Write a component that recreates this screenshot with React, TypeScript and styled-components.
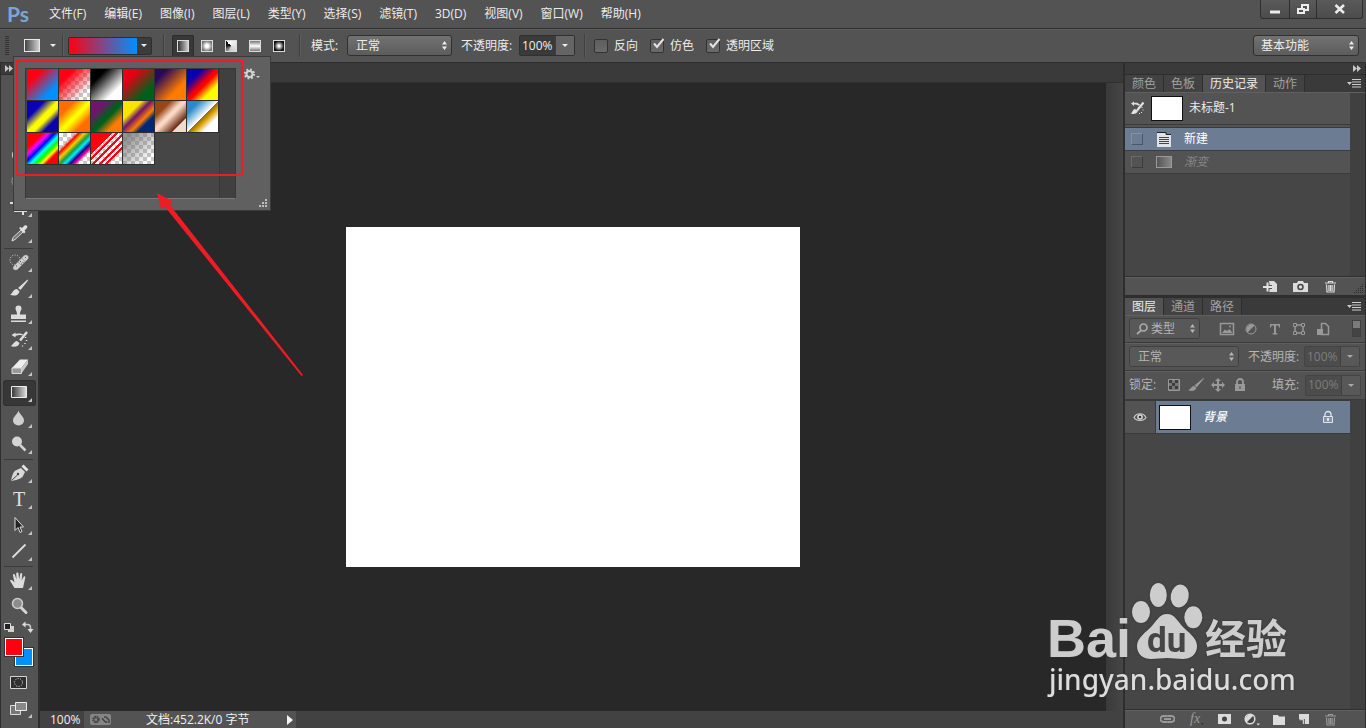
import React from "react";
import styled, { createGlobalStyle, css } from "styled-components";

const GlobalStyle = createGlobalStyle`
  *, *::before, *::after { box-sizing: border-box; }
  body { margin: 0; background: #282828; }
  body, button, input, select {
    font-family: "Open Sans", "Noto Sans CJK SC", sans-serif;
    font-size: 12px;
    line-height: 16px;
    color: #ececec;
  }
  button { padding: 0; border: 0; background: none; }
  ul { list-style: none; margin: 0; padding: 0; }
`;

const LINE = "#2e2e2e";
const CHECKER = "repeating-conic-gradient(#c8c8c8 0 25%, #ffffff 0 50%) 0 0 / 8px 8px";

/* ---------- page frame ---------- */

const Page = styled.div`
  position: relative;
  display: flex;
  flex-direction: column;
  min-height: 100vh;
  overflow: hidden;
`;

const MenuBar = styled.header`
  display: flex;
  align-items: center;
  height: 28px;
  padding-left: 7px;
  background: #535353;
`;

const Logo = styled.span`
  width: 32px;
  font-family: Lato, sans-serif;
  font-size: 21px;
  font-weight: 700;
  line-height: 26px;
  color: #7ba6d2;
`;

const MenuList = styled.nav`
  display: flex;
  flex: 1;
  gap: 18px;
  padding-left: 10px;
`;

const MenuItem = styled.button`
  white-space: nowrap;
`;

const WindowButtons = styled.div`
  display: flex;
  align-self: flex-start;
  margin-right: 3px;
  border: 1px solid ${LINE};
  border-top: 0;
  border-radius: 0 0 3px 3px;
  background: linear-gradient(#5a5a5a, #4c4c4c);
`;

const WindowButton = styled.button<{ $width: number }>`
  display: flex;
  justify-content: center;
  width: ${(p) => p.$width}px;
  height: 18px;
  & + & { border-left: 1px solid ${LINE}; }
`;

const OptionsBar = styled.div`
  position: relative;
  z-index: 2;
  display: flex;
  align-items: center;
  height: 35px;
  padding: 0 7px 0 5px;
  border-top: 1px solid ${LINE};
  border-bottom: 1px solid ${LINE};
  background: #535353;
  box-shadow: inset 0 1px #606060;
  white-space: nowrap;
`;

const Divider = styled.i`
  width: 2px;
  height: 23px;
  background: #404040;
  border-right: 1px solid #5c5c5c;
`;

const Grip = styled.i`
  width: 4px;
  height: 19px;
  background: repeating-linear-gradient(#333 0 1px, transparent 1px 2px);
`;

const ToolPreset = styled.button`
  display: flex;
  align-items: center;
  gap: 10px;
  width: 53px;
  padding-left: 15px;
`;

const Ramp = styled.i`
  width: 16px;
  height: 13px;
  border: 1px solid #e8e8e8;
  background: linear-gradient(90deg, #444, #d0d0d0);
`;

const Caret = styled.i`
  width: 0;
  height: 0;
  border: 3px solid transparent;
  border-top-color: currentColor;
  border-bottom: 0;
`;

const GradientPicker = styled.div`
  display: flex;
  width: 84px;
  height: 18px;
  margin: 0 11px 0 4px;
  border: 1px solid ${LINE};
  border-radius: 2px;
  background: #3c3c3c;
`;

const GradientPreview = styled.button`
  flex: 1;
  background: linear-gradient(90deg, #ff0010, #0090ff);
`;

const PickerArrow = styled.button`
  display: flex;
  align-items: center;
  justify-content: center;
  width: 14px;
`;

const TypeGroup = styled.div`
  display: flex;
  gap: 2px;
  margin: 0 9px 0 7px;
`;

const TypeButton = styled.button<{ $active?: boolean }>`
  display: flex;
  align-items: center;
  justify-content: center;
  width: 22px;
  height: 22px;
  border-radius: 2px;
  ${(p) => p.$active && css`background: #383838; box-shadow: inset 0 0 0 1px #2c2c2c;`}
`;

const TypeFill = styled.i<{ $fill: string }>`
  width: 12px;
  height: 12px;
  border: 1px solid #dcdcdc;
  background: ${(p) => p.$fill};
`;

const Label = styled.label<{ $dim?: boolean }>`
  color: ${(p) => (p.$dim ? "#b4b4b4" : "#ececec")};
`;

const FieldLabel = styled(Label)<{ $width: number }>`
  width: ${(p) => p.$width}px;
  flex: none;
`;

const SelectBox = styled.span<{ $width: number; $dim?: boolean }>`
  position: relative;
  flex: none;
  display: flex;
  width: ${(p) => p.$width}px;
  height: 21px;
  border: 1px solid ${(p) => (p.$dim ? "#404040" : "#303030")};
  border-radius: 3px;
  background: ${(p) => (p.$dim ? "#585858" : "linear-gradient(#727272, #5c5c5c)")};
  color: ${(p) => (p.$dim ? "#b4b4b4" : "#ececec")};
  svg { position: absolute; right: 3px; top: 4px; pointer-events: none; }
`;

const Select = styled.select<{ $pad: number }>`
  appearance: none;
  width: 100%;
  padding: 0 0 0 ${(p) => p.$pad}px;
  border: 0;
  background: none;
  color: inherit;
`;

const NumberBox = styled.span<{ $dim?: boolean }>`
  display: flex;
  flex: none;
  width: 56px;
  height: 21px;
  border: 1px solid ${(p) => (p.$dim ? "#444" : "#303030")};
  border-radius: 2px;
  color: ${(p) => (p.$dim ? "#7d7d7d" : "#f0f0f0")};
  background: ${(p) => (p.$dim ? "#4c4c4c" : "#3a3a3a")};
`;

const NumberInput = styled.input`
  width: 35px;
  padding: 0 0 0 2px;
  border: 0;
  background: none;
  color: inherit;
`;

const NumberArrow = styled.button<{ $dim?: boolean }>`
  display: flex;
  flex: 1;
  align-items: center;
  justify-content: center;
  border-left: 1px solid #404040;
  background: ${(p) => (p.$dim ? "#585858" : "#656565")};
  color: ${(p) => (p.$dim ? "#a8a8a8" : "#ececec")};
`;

const Check = styled.span`
  position: relative;
  display: flex;
  align-items: center;
  gap: 6px;
  margin-right: 12px;
  svg { position: absolute; left: 2px; top: -1px; pointer-events: none; }
`;

const CheckInput = styled.input`
  appearance: none;
  width: 14px;
  height: 14px;
  margin: 0;
  border: 1px solid #333;
  border-radius: 2px;
  background: linear-gradient(#5e5e5e, #6a6a6a);
`;

const Spacer = styled.i`
  flex: 1;
`;

/* ---------- gradient popup ---------- */

const Popup = styled.section`
  position: absolute;
  top: 27px;
  left: 13px;
  display: flex;
  align-items: flex-start;
  width: 258px;
  height: 155px;
  padding: 11px 0 0 11px;
  border: 1px solid #3a3a3a;
  background: #606060;
`;

const PopupList = styled.div`
  display: flex;
  width: 211px;
  height: 131px;
  border: 1px solid #383838;
  border-bottom-color: #7a7a7a;
  background: #464646;
`;

const SwatchGrid = styled.ul`
  display: grid;
  flex: 1;
  grid-template-columns: repeat(6, 32px);
  grid-auto-rows: 32px;
  padding: 0 0 0 1px;
`;

const Swatch = styled.button<{ $fill: string }>`
  display: block;
  width: 32px;
  height: 32px;
  border: 1px solid #2e2e2e;
  border-width: 0 1px 1px 0;
  background: ${(p) => p.$fill};
`;

const PopupScroll = styled.i`
  width: 16px;
  border: 1px solid #383838;
  border-width: 0 0 0 1px;
  background: #404040;
`;

const GearButton = styled.button`
  display: flex;
  margin: 0 0 0 8px;
`;

const ResizeGrip = styled.svg`
  position: absolute;
  right: 2px;
  bottom: 2px;
`;

/* ---------- workspace ---------- */

const Workspace = styled.main`
  display: flex;
  flex: 1;
`;

const ToolColumn = styled.aside`
  display: flex;
  flex: none;
  flex-direction: column;
  width: 40px;
  border: solid ${LINE};
  border-width: 0 2px 0 1px;
  background: #535353;
`;

const DockHeader = styled.div<{ $end?: boolean }>`
  display: flex;
  align-items: center;
  justify-content: ${(p) => (p.$end ? "flex-end" : "flex-start")};
  height: 12px;
  padding: 0 4px;
  border-bottom: 1px solid ${LINE};
  background: #3a3a3a;
`;

const ToolList = styled.div`
  display: flex;
  flex-direction: column;
  padding: 16px 0 0 3px;
`;

const ToolButton = styled.button<{ $active?: boolean }>`
  display: block;
  width: 31px;
  height: 24px;
  margin: 1px 0;
  border-radius: 2px;
  ${(p) => p.$active && css`background: #373737; box-shadow: 0 0 0 1px #303030;`}
  svg { display: block; }
`;

const ToolSeparator = styled.i`
  width: 29px;
  height: 1px;
  margin: 1px 0;
  background: #3a3a3a;
`;

const ColorArea = styled.div`
  position: relative;
  width: 29px;
  height: 29px;
  margin: 3px 0 4px 0;
`;

const ColorChip = styled.button<{ $color: string; $back?: boolean }>`
  position: absolute;
  left: ${(p) => (p.$back ? 10 : 0)}px;
  top: ${(p) => (p.$back ? 10 : 0)}px;
  width: 20px;
  height: 20px;
  border: 1px solid #333;
  background: ${(p) => p.$color};
  box-shadow: inset 0 0 0 1px #fff;
`;

const Center = styled.section`
  display: flex;
  flex: 1;
  flex-direction: column;
  min-width: 0;
`;

const DocumentTabs = styled.div`
  height: 20px;
  border-bottom: 1px solid #303030;
  background: #3a3a3a;
`;

const CanvasRow = styled.div`
  display: flex;
  flex: 1;
`;

const CanvasArea = styled.div`
  display: flex;
  flex: 1;
  align-items: center;
  justify-content: center;
  background: #282828;
`;

const Artboard = styled.div`
  width: 454px;
  height: 340px;
  background: #fff;
`;

const ScrollTrack = styled.i`
  width: 17px;
  background: linear-gradient(90deg, #3a3a3a, #464646);
`;

const StatusBar = styled.footer`
  display: flex;
  align-items: center;
  height: 17px;
  background: #424242;
  color: #f0f0f0;
  white-space: nowrap;
`;

const Zoom = styled.span`
  width: 44px;
  padding-left: 10px;
`;

const StatusInfo = styled.div`
  display: flex;
  align-items: center;
  width: 212px;
  height: 17px;
  padding: 0 3px 0 6px;
  background: #535353;
`;

const StatusText = styled.span`
  flex: 1;
  padding-left: 35px;
`;

/* ---------- panels ---------- */

const Dock = styled.aside`
  display: flex;
  flex: none;
  flex-direction: column;
  width: 243px;
  border: solid ${LINE};
  border-width: 0 1px 0 2px;
  background: #464646;
`;

const TabBar = styled.div`
  display: flex;
  height: 17px;
  padding-right: 4px;
  background: #3a3a3a;
`;

const Tab = styled.button<{ $active?: boolean }>`
  height: 17px;
  padding: 0 7px;
  border-right: 1px solid ${LINE};
  color: ${(p) => (p.$active ? "#ececec" : "#a0a0a0")};
  background: ${(p) => (p.$active ? "#535353" : "#424242")};
`;

const PanelMenu = styled.button`
  display: flex;
  align-items: center;
  margin-left: auto;
`;

const PanelBody = styled.div`
  display: flex;
`;

const HistoryPanel = styled(PanelBody)`
  height: 184px;
  border-top: 1px solid #606060;
`;

const PanelList = styled.ul`
  flex: 1;
  background: #464646;
`;

const Snapshot = styled.li`
  display: flex;
  align-items: center;
  gap: 6px;
  height: 35px;
  padding: 0 5px 1px 5px;
  border-bottom: 4px double #3a3a3a;
  background: #535353;
`;

const Thumb = styled.i`
  width: 32px;
  height: 25px;
  border: 1px solid #111;
  background: #fff;
`;

const HistoryRow = styled.li<{ $active?: boolean }>`
  display: flex;
  align-items: center;
  height: 23px;
  padding-left: 6px;
  border-bottom: 1px solid #3c3c3c;
  background: ${(p) => (p.$active ? "#6b7c93" : "#535353")};
  color: ${(p) => (p.$active ? "#fff" : "#858585")};
  font-style: ${(p) => (p.$active ? "normal" : "italic")};
  svg, ${Ramp} { margin: 0 12px 0 13px; flex: none; }
  ${Ramp} { height: 12px; border-color: #9a9a9a; background: linear-gradient(90deg, #555, #888); }
`;

const HistoryMark = styled.i<{ $active?: boolean }>`
  width: 12px;
  height: 12px;
  border: 1px solid ${(p) => (p.$active ? "#4a5666" : "#3c3c3c")};
  border-top-color: ${(p) => (p.$active ? "#8592a5" : "#6a6a6a")};
  border-left-color: ${(p) => (p.$active ? "#8592a5" : "#6a6a6a")};
`;

const PanelScroll = styled.i`
  width: 15px;
  background: #404040;
`;

const PanelFooter = styled.div<{ $gap: number; $right: number }>`
  position: relative;
  display: flex;
  align-items: center;
  justify-content: flex-end;
  gap: ${(p) => p.$gap}px;
  height: 19px;
  padding-right: ${(p) => p.$right}px;
  border-top: 1px solid #303030;
  background: #535353;
  box-shadow: inset 0 1px #606060;
`;

const FooterButton = styled.button`
  display: flex;
`;

const DockGap = styled.i`
  height: 3px;
  background: ${LINE};
`;

const LayerRowBar = styled.div<{ $height: number }>`
  display: flex;
  align-items: center;
  height: ${(p) => p.$height}px;
  padding: 0 4px;
  border-bottom: 1px solid #3a3a3a;
  background: #535353;
  box-shadow: inset 0 1px #606060;
  white-space: nowrap;
`;

const FilterIcons = styled.div`
  display: flex;
  flex: 1;
  gap: 8px;
  padding-left: 19px;
  color: #999;
`;

const LockIcons = styled.div`
  display: flex;
  flex: 1;
  gap: 6px;
  color: #999;
`;

const IconButton = styled.button`
  display: flex;
  color: inherit;
`;

const FilterToggle = styled.button`
  width: 9px;
  height: 17px;
  border: 1px solid #404040;
  background: linear-gradient(#7a7a7a 0 50%, #444 50%);
`;

const LayersBody = styled(PanelBody)`
  flex: 1;
`;

const LayerItem = styled.li`
  display: flex;
  align-items: center;
  height: 34px;
  padding-right: 16px;
  border: solid #3a3a3a;
  border-width: 1px 0;
  background: linear-gradient(90deg, #535353 30px, #3a3a3a 30px 31px, #6b7c93 31px);
`;

const EyeButton = styled.button`
  display: flex;
  justify-content: center;
  width: 34px;
  padding-right: 4px;
`;

const LayerName = styled.span`
  flex: 1;
  padding-left: 12px;
  font-style: italic;
  font-weight: 500;
  color: #fff;
`;

/* ---------- overlays ---------- */

const Annotation = styled.svg`
  position: absolute;
  z-index: 3;
  top: 0;
  left: 0;
  pointer-events: none;
`;

const Watermark = styled.svg`
  position: absolute;
  z-index: 3;
  right: 66px;
  bottom: 24px;
  pointer-events: none;
  filter: drop-shadow(0 0 1px #333);
`;

/* ---------- drawings ---------- */

const UpDown = () => (
  <svg width="7" height="11" viewBox="0 0 7 11" fill="currentColor">
    <path d="M3.5 1 6 4.5H1zM3.5 10 1 6.5h5z" />
  </svg>
);

const Chevrons = () => (
  <svg width="8" height="7" viewBox="0 0 8 7" fill="#c8c8c8">
    <path d="M0 0l4 3.5L0 7zM4 0l4 3.5L4 7z" />
  </svg>
);

const MenuGlyph = () => (
  <svg width="14" height="9" viewBox="0 0 14 9">
    <path d="M0 3h5L2.500 6z" fill="#ccc" />
    <path d="M5 .5h9M5 3h9M5 5.500h9M5 8h9" fill="none" stroke="#ccc" strokeWidth="1" />
  </svg>
);

const Tick = () => (
  <svg width="15" height="14" viewBox="0 0 15 14" fill="none" stroke="#e4e4e4" strokeWidth="2">
    <path d="M2 6.500 5 10 11.500 2" />
  </svg>
);

const Gear = () => (
  <svg width="16" height="14" viewBox="0 0 16 14">
    <circle cx="5.500" cy="6" r="3" fill="none" stroke="#d4d4d4" strokeWidth="2" />
    <circle cx="5.500" cy="6" r="4.600" fill="none" stroke="#d4d4d4" strokeWidth="2" strokeDasharray="1.800 1.810" />
    <path d="M12 8h4l-2 2z" fill="#ccc" />
  </svg>
);

const Trash = ({ color = "#d0d0d0" }) => (
  <svg width="13" height="13" viewBox="0 0 13 13" fill="none" stroke={color}>
    <path d="M1 3h11M4.500 2.500v-1h4v1M2.500 4.500 3 12h7l.5-7.500M4.900 5v6M6.500 5v6M8.100 5v6" strokeWidth="1.200" />
  </svg>
);

const Padlock = () => (
  <svg width="12" height="14" viewBox="0 0 12 14">
    <path d="M3 6V4.500a3 3 0 0 1 6 0V6" fill="none" stroke="#e0e4ea" strokeWidth="1.300" />
    <path d="M1.500 6.500h9v6h-9z" fill="#8492a6" stroke="#e0e4ea" />
    <path d="M6 8v3" stroke="#fff" strokeWidth="1.500" />
  </svg>
);

const HistoryBrush = () => (
  <svg width="15" height="14" viewBox="0 0 15 14">
    <path d="M1 2.500 4 .5v1.200h3l3 1.800-1 1.200-3-1.200H4V5z" fill="#ddd" />
    <path d="M13.500 1.500 7 9.500" stroke="#e4e4e4" strokeWidth="2" />
    <path d="M.5 12.500c2-.5 2-4 4.500-4.500l2.800 2C7 13 3.500 13.500.5 12.500z" fill="#e4e4e4" />
    <path d="M12 6v1M13 8.500v1M11.500 11v1M9.500 12v1" stroke="#ddd" />
  </svg>
);

const DocIcon = () => (
  <svg width="16" height="15" viewBox="-1 0 16 15">
    <path d="M0 1h9v2h5v12H0z" fill="#dfe3e8" />
    <path d="M2 5.500h10M2 7.500h10M2 9.500h10M2 11.500h10" stroke="#3e4958" />
    <path d="M0 .5h9v2h5" fill="none" stroke="#222" />
  </svg>
);

const Tri = () => <path d="M28 18v4h-4z" fill="#c4c4c4" />;

const toolArt: Record<string, React.ReactNode> = {
  移动: <path d="M9 5v13l4-4h5z" fill="#ddd" />,
  选框: <path d="M9.500 6.500h13v11h-13z" fill="none" stroke="#ddd" strokeDasharray="2 2" />,
  套索: <path d="M10 16c-4-8 3-11 8-9s4 8-2 7-7 0-6 5" fill="none" stroke="#ddd" strokeWidth="1.500" />,
  快速选择: <circle cx="14" cy="12" r="6" fill="none" stroke="#ddd" strokeDasharray="1 1" />,
  裁剪: <path d="M6 8h13v12M11 3v13h12" fill="none" stroke="#ddd" strokeWidth="2" />,
  吸管: (
    <>
      <path d="M8 20l1-3.500 8-7.500 2 2-8 7.500z" fill="#777" stroke="#ddd" />
      <path d="M15 7l1.500-1 1.500 1 2.500-2.500c2-1 3.500.5 2.500 2.500L20.500 9.500l1 1.500-1.500 1.500z" fill="#e0e0e0" />
    </>
  ),
  污点修复: (
    <>
      <circle cx="11" cy="10" r="5" fill="none" stroke="#ddd" strokeDasharray="1 1.500" />
      <path d="M9.500 16.500 20 5.500c3-1.500 5.500 1 4 3.500L13.500 19.500c-3 1.500-5.500-.500-4-3z" fill="#d0d0d0" stroke="#888" strokeWidth=".5" />
      <path d="M14 12l4 4M17.500 8l4 4" stroke="#888" strokeWidth=".7" />
      <path d="M16 11.500h1M18.500 12.500h1M17 14h1M12 16h1M21 7.500h1" stroke="#555" />
    </>
  ),
  画笔: (
    <>
      <path d="M23.500 3.500c.8.500.5 1.200 0 1.800L16.500 14l-2.500-2z" fill="#ddd" />
      <path d="M6 18.500c2.500-.5 2.500-5 7-5.500l2.500 2.500C14.500 20 9 20.500 6 18.500z" fill="#e0e0e0" />
    </>
  ),
  图章: (
    <path d="M11.500 6.500a3 3 0 0 1 6 0c0 2-1.500 2.500-1.500 6h6V17H7v-4.500h6c0-3.500-1.500-4-1.500-6zM7 18.500h15V20H7z" fill="#dcdcdc" />
  ),
  历史画笔: (
    <>
      <path d="M7.500 7l4-2.500v1.500c4-1 7-.500 8 1.500-3-1-5-.500-8 .5v1.500z" fill="#ddd" />
      <path d="M23 4l-7 8.500" stroke="#ddd" strokeWidth="2.500" />
      <path d="M6.500 18c2.500-.5 3-4.500 6.500-5l2.500 2c-1 4-5.500 4.500-9 3z" fill="#ddd" />
      <path d="M21.500 9v1M22.500 12v1M21 15v1M18.500 17.500v1" stroke="#ddd" strokeWidth="1.500" />
    </>
  ),
  橡皮擦: (
    <>
      <path d="M8 14l8-8.500h8l-6.500 8.500z" fill="#eee" />
      <path d="M8 14h9.500v5.500H8z" fill="#999" stroke="#ddd" />
      <path d="M17.500 14 24 5.500v4.500l-6.500 9.500z" fill="#c8c8c8" />
    </>
  ),
  渐变: (
    <>
      <defs>
        <linearGradient id="toolRamp">
          <stop offset="0" stopColor="#333" />
          <stop offset="1" stopColor="#e0e0e0" />
        </linearGradient>
      </defs>
      <path d="M7.500 6.500h15v11h-15z" fill="url(#toolRamp)" stroke="#ececec" />
    </>
  ),
  模糊: <path d="M14.500 4.500c1 4 5.500 6 5.500 10a5.500 5 0 0 1-11 0c0-4 4.500-6 5.500-10z" fill="#cfcfcf" />,
  减淡: (
    <>
      <circle cx="13" cy="9.500" r="5" fill="#d4d4d4" />
      <path d="M16 13l5.500 5.500" stroke="#d4d4d4" strokeWidth="2.500" />
    </>
  ),
  钢笔: (
    <>
      <path d="M7 20c1-5 2-9 4.500-10.500L17 7l4 4-2.500 5c-3 2.500-6 3-11.500 4z" fill="#d8d8d8" />
      <path d="M17.500 5.500l2-2 5 5-2 2z" fill="#e4e4e4" />
      <path d="M7.500 19.500l6-5.500" stroke="#444" />
      <circle cx="14" cy="13" r="1.200" fill="#444" />
    </>
  ),
  文字: <text x="9" y="19" fontFamily="Liberation Serif, serif" fontSize="20" fill="#e0e0e0">T</text>,
  路径选择: <path d="M11 4.500v13l3-3 2 5 2-1-2-4.500h3.500z" fill="#222" stroke="#ddd" />,
  直线: <path d="M8.500 18.500 21.500 5.500" stroke="#dedede" strokeWidth="1.800" />,
  抓手: (
    <path
      d="M10.500 20 6.500 13.500c-1-1.500.5-2.500 2-1l2 2-1.500-7c-.3-1.500 1.500-2 2-.5l1.500 4.500-.3-6c0-1.500 2.200-1.500 2.300 0l.7 6 1-5.500c.3-1.500 2.200-1 2 .5l-.5 6 1.800-3.500c.8-1.300 2.200-.5 1.700 1L19 20z"
      fill="#dcdcdc"
    />
  ),
  缩放: (
    <>
      <path d="M17 13.500l5 5" stroke="#d4d4d4" strokeWidth="3" strokeLinecap="round" />
      <circle cx="13.500" cy="9.500" r="5" fill="#8c8c8c" stroke="#ccc" strokeWidth="1.500" />
    </>
  ),
};

const toolGroups = [
  ["移动", "选框", "套索", "快速选择", "裁剪", "吸管"],
  ["污点修复", "画笔", "图章", "历史画笔", "橡皮擦", "渐变", "模糊", "减淡"],
  ["钢笔", "文字", "路径选择", "直线"],
  ["抓手", "缩放"],
];

const ToolArt = ({ children, corner = true }: { children: React.ReactNode; corner?: boolean }) => (
  <svg width="31" height="24" viewBox="0 1 31 24">
    {children}
    {corner && <Tri />}
  </svg>
);

/* ---------- data ---------- */

const menus = ["文件(F)", "编辑(E)", "图像(I)", "图层(L)", "类型(Y)", "选择(S)", "滤镜(T)", "3D(D)", "视图(V)", "窗口(W)", "帮助(H)"];

const gradientTypes: [string, string][] = [
  ["线性", "linear-gradient(90deg, #333, #ccc)"],
  ["径向", "radial-gradient(#fff 20%, #777 75%)"],
  ["角度", "conic-gradient(from 315deg, #fff, #ccc 65%, #111 90%)"],
  ["对称", "linear-gradient(#777, #fff 50%, #777)"],
  ["菱形", "radial-gradient(#fff 10%, #111 70%)"],
];

const swatches: [string, string][] = [
  ["前景色到背景色", "linear-gradient(135deg, #ff0010 25%, #0090ff 75%)"],
  ["前景色到透明", `linear-gradient(135deg, #ff0010 25%, #ff001000 80%), ${CHECKER}`],
  ["黑白", "linear-gradient(135deg, #000 25%, #fff 75%)"],
  ["红绿", "linear-gradient(135deg, #e60012 25%, #00601b 75%)"],
  ["紫橙", "linear-gradient(135deg, #290a59 20%, #ff7c00 70%)"],
  ["蓝红黄", "linear-gradient(135deg, #0a00b2 25%, #ff0000 50%, #ff0000 54%, #fffc00 75%)"],
  ["蓝黄蓝", "linear-gradient(135deg, #0b01b8 28%, #fdfa03 50%, #fdfa03 60%, #0b02aa 76%)"],
  ["橙黄橙", "linear-gradient(135deg, #ff6e02 25%, #ffff00 50%, #ffff00 54%, #ff6d00 76%)"],
  ["紫绿橙", "linear-gradient(135deg, #6f156c 25%, #00601b 50%, #00601b 54%, #fd7c00 76%)"],
  ["黄紫橙蓝", "linear-gradient(135deg, #f9e600 30%, #6f156c 45%, #fd7c00 62%, #002874 74%)"],
  ["铜色", "linear-gradient(135deg, #974617 25%, #fbd8c5 45%, #fbd8c5 50%, #6c2e16 76%, #efdbcd 79%)"],
  ["铬黄", "linear-gradient(135deg, #2989cc 20%, #fff 50%, #906a00 51%, #d99f00 60%, #fff 76%)"],
  ["色谱", "linear-gradient(135deg, #f00 25%, #f0f 35%, #00f 45%, #0ff 55%, #0f0 64%, #ff0 73%, #f00 80%)"],
  ["透明彩虹", `linear-gradient(135deg, #f000 26%, #f00 32%, #fc0 41%, #1a9b3c 51%, #00f0ff 59%, #00108c 67%, #ff00a8 75%, #ff00a800 80%), ${CHECKER}`],
  ["透明条纹", `linear-gradient(135deg, #ff0010 34%, transparent 34% 40%, #ff0010 40% 45%, transparent 45% 51%, #ff0010 51% 56%, transparent 56% 62%, #ff0010 62% 67%, transparent 67% 72%, #ff0010 72% 76%, transparent 76%), ${CHECKER}`],
  ["中灰密度", `linear-gradient(135deg, #777777cc 15%, #77777700 85%), ${CHECKER}`],
];

const checks = [
  { id: "reverse", label: "反向", on: false },
  { id: "dither", label: "仿色", on: true },
  { id: "transparency", label: "透明区域", on: true },
];

const BlendSelect = styled(SelectBox)`
  margin-right: 9px;
`;

const OptionDivider = styled(Divider)`
  margin: 0 8px 0 9px;
`;

const ModeLabel = styled(FieldLabel)`
  margin-left: 10px;
`;

/* ---------- parts ---------- */

const Percent = ({ id, dim }: { id: string; dim?: boolean }) => (
  <NumberBox $dim={dim}>
    <NumberInput id={id} defaultValue="100%" />
    <NumberArrow $dim={dim} aria-label="展开">
      <Caret />
    </NumberArrow>
  </NumberBox>
);

const GradientPopup = () => (
  <Popup aria-label="渐变拾色器">
    <PopupList>
      <SwatchGrid>
        {swatches.map(([name, fill]) => (
          <li key={name}>
            <Swatch $fill={fill} aria-label={name} />
          </li>
        ))}
      </SwatchGrid>
      <PopupScroll />
    </PopupList>
    <GearButton aria-label="设置">
      <Gear />
    </GearButton>
    <ResizeGrip width="9" height="9" viewBox="0 0 9 9" fill="#bdbdbd">
      <path d="M6 0h2v2H6zM3 3h2v2H3zM6 3h2v2H6zM0 6h2v2H0zM3 6h2v2H3zM6 6h2v2H6z" />
    </ResizeGrip>
  </Popup>
);

const Options = () => (
  <OptionsBar>
    <Grip />
    <ToolPreset aria-label="工具预设">
      <Ramp />
      <Caret />
    </ToolPreset>
    <Divider />
    <GradientPicker>
      <GradientPreview aria-label="编辑渐变" />
      <PickerArrow aria-label="打开渐变拾色器">
        <Caret />
      </PickerArrow>
    </GradientPicker>
    <Divider />
    <TypeGroup>
      {gradientTypes.map(([name, fill], i) => (
        <TypeButton key={name} $active={i === 0} aria-label={name}>
          <TypeFill $fill={fill} />
        </TypeButton>
      ))}
    </TypeGroup>
    <Divider />
    <ModeLabel htmlFor="mode" $width={36}>模式:</ModeLabel>
    <BlendSelect $width={105}>
      <Select id="mode" $pad={8}>
        <option>正常</option>
      </Select>
      <UpDown />
    </BlendSelect>
    <FieldLabel htmlFor="opacity" $width={58}>不透明度:</FieldLabel>
    <Percent id="opacity" />
    <OptionDivider />
    {checks.map((c) => (
      <Check key={c.id}>
        <CheckInput type="checkbox" id={c.id} defaultChecked={c.on} />
        {c.on && <Tick />}
        <Label htmlFor={c.id}>{c.label}</Label>
      </Check>
    ))}
    <Spacer />
    <SelectBox $width={106}>
      <Select $pad={7} aria-label="工作区">
        <option>基本功能</option>
      </Select>
      <UpDown />
    </SelectBox>
    <GradientPopup />
  </OptionsBar>
);

const Tools = () => (
  <ToolColumn>
    <DockHeader>
      <Chevrons />
    </DockHeader>
    <ToolList>
      {toolGroups.map((group, i) => (
        <React.Fragment key={group[0]}>
          {i > 0 && <ToolSeparator />}
          {group.map((name) => (
            <ToolButton key={name} $active={name === "渐变"} aria-label={name}>
              <ToolArt corner={name !== "缩放"}>{toolArt[name]}</ToolArt>
            </ToolButton>
          ))}
        </React.Fragment>
      ))}
      <svg width="31" height="14" viewBox="0 0 31 14">
        <path d="M4 6h6v6H4z" fill="#d0d0d0" />
        <path d="M.5 3.500h6v6h-6z" fill="#222" stroke="#ddd" />
        <path d="M20.500 4.500h3q3 0 3 3v3" fill="none" stroke="#ccc" strokeWidth="1.500" />
        <path d="M18 4.500 21.500 1.500v6zM23.500 9h6L26.500 13z" fill="#ddd" />
      </svg>
      <ColorArea>
        <ColorChip $back $color="#0090ff" aria-label="背景色" />
        <ColorChip $color="#ff0010" aria-label="前景色" />
      </ColorArea>
      <ToolButton aria-label="快速蒙版">
        <ToolArt corner={false}>
          <path d="M6.500 6.500h16v12h-16z" fill="#2e2e2e" stroke="#d4d4d4" />
          <circle cx="14.500" cy="12.500" r="4" fill="none" stroke="#eee" strokeDasharray="1 1.500" />
        </ToolArt>
      </ToolButton>
      <ToolButton aria-label="屏幕模式">
        <ToolArt>
          <path d="M6.500 9.500h10v9h-10z" fill="#777" stroke="#ddd" />
          <path d="M11.500 6.500h11v8h-11z" fill="#888" stroke="#ececec" />
        </ToolArt>
      </ToolButton>
    </ToolList>
  </ToolColumn>
);

const History = () => (
  <>
    <TabBar>
      <Tab>颜色</Tab>
      <Tab>色板</Tab>
      <Tab $active>历史记录</Tab>
      <Tab>动作</Tab>
      <PanelMenu aria-label="面板菜单">
        <MenuGlyph />
      </PanelMenu>
    </TabBar>
    <HistoryPanel>
      <PanelList>
        <Snapshot>
          <HistoryBrush />
          <Thumb />
          未标题-1
        </Snapshot>
        <HistoryRow $active>
          <HistoryMark $active />
          <DocIcon />
          新建
        </HistoryRow>
        <HistoryRow>
          <HistoryMark />
          <Ramp />
          渐变
        </HistoryRow>
      </PanelList>
      <PanelScroll />
    </HistoryPanel>
    <PanelFooter $gap={16} $right={28}>
      <FooterButton aria-label="新建文档">
        <svg width="14" height="13" viewBox="0 0 14 13">
          <path d="M6 1h5l3 3v8H6z" fill="#dcdcdc" />
          <path d="M0 7h9M4.500 2.500v9" stroke="#535353" strokeWidth="4" />
          <path d="M0 7h9M4.500 2.500v9" stroke="#e4e4e4" strokeWidth="2" />
        </svg>
      </FooterButton>
      <FooterButton aria-label="新建快照">
        <svg width="15" height="13" viewBox="0 0 15 13">
          <path d="M0 3h4l1-2h5l1 2h4v9H0z" fill="#dcdcdc" />
          <circle cx="7.500" cy="7" r="2.500" fill="none" stroke="#444" strokeWidth="1.500" />
        </svg>
      </FooterButton>
      <FooterButton aria-label="删除">
        <Trash color="#dcdcdc" />
      </FooterButton>
      <ResizeGrip width="9" height="9" viewBox="0 0 9 9" fill="#2c2c2c">
        <path d="M8 0h1v1H8zM6 2h1v1H6zM8 2h1v1H8zM4 4h1v1H4zM6 4h1v1H6zM8 4h1v1H8zM2 6h1v1H2zM4 6h1v1H4zM6 6h1v1H6zM8 6h1v1H8zM0 8h1v1H0zM2 8h1v1H2zM4 8h1v1H4zM6 8h1v1H6zM8 8h1v1H8z" />
      </ResizeGrip>
    </PanelFooter>
  </>
);

const filterArt: [string, React.ReactNode][] = [
  ["像素", <><path d="M1.500 2.500h13v11h-13z" fill="none" stroke="currentColor" strokeWidth="1.500" /><path d="M3 12l3-3.500 2 1.500 2.500-2 3 4z" fill="currentColor" /><circle cx="11" cy="5.500" r="1" fill="currentColor" /></>],
  ["调整", <><circle cx="8" cy="8" r="5" fill="none" stroke="currentColor" /><path d="M4.500 11.500 11.500 4.500A5 5 0 0 0 4.500 11.500z" fill="currentColor" /></>],
  ["文字", <path d="M3 3h10v3.500h-1L11.500 4.500H9V12l1.500.500v1h-5v-1L7 12V4.500H4.500L4 6.500H3z" fill="currentColor" />],
  ["形状", <><path d="M4 4h8v8H4z" fill="none" stroke="currentColor" strokeWidth="1.500" /><path d="M2.500 2.500h3v3h-3zM10.500 2.500h3v3h-3zM2.500 10.500h3v3h-3zM10.500 10.500h3v3h-3z" fill="#535353" stroke="currentColor" /></>],
  ["智能对象", <><path d="M6.500 2.500h4l3 3v8h-7z" fill="none" stroke="currentColor" strokeWidth="1.500" /><path d="M2 8h6v6H2z" fill="currentColor" /></>],
];

const lockArt: [string, React.ReactNode][] = [
  ["锁定透明像素", <><path d="M2.500 2.500h11v11h-11z" fill="#777" stroke="currentColor" /><path d="M3 3h3v3H3zM9 3h3v3H9zM6 6h3v3H6zM3 9h3v3H3zM9 9h3v3H9z" fill="#3e3e3e" /></>],
  ["锁定图像", <><path d="M15.500 1.500 8.500 10 7 8.500z" fill="currentColor" stroke="currentColor" /><path d="M0 13c2.500 0 3-3.500 6-4l2.500 2C7 14.500 3 14.500 0 13z" fill="currentColor" /></>],
  ["锁定位置", <path d="M8 1l3 3H9v3h3V5l3 3-3 3V9H9v3h2l-3 3-3-3h2V9H4v2L1 8l3-3v2h3V4H5z" fill="currentColor" />],
  ["锁定全部", <><path d="M5 7V5a3 3 0 0 1 6 0v2" fill="none" stroke="currentColor" strokeWidth="1.800" /><path d="M3 7h10v7H3z" fill="currentColor" /><path d="M7.500 9h1v3h-1z" fill="#444" /></>],
];

const SearchGlyph = styled.svg`
  && { left: 6px; right: auto; }
`;

const Layers = () => (
  <>
    <TabBar>
      <Tab $active>图层</Tab>
      <Tab>通道</Tab>
      <Tab>路径</Tab>
      <PanelMenu aria-label="面板菜单">
        <MenuGlyph />
      </PanelMenu>
    </TabBar>
    <LayerRowBar $height={28}>
      <SelectBox $width={71} $dim>
        <SearchGlyph width="13" height="12" viewBox="0 0 13 12" fill="none" stroke="#aaa" strokeWidth="1.700">
          <circle cx="7.500" cy="4.500" r="3.500" />
          <path d="M5 7.500 1 11" />
        </SearchGlyph>
        <Select $pad={21} aria-label="筛选">
          <option>类型</option>
        </Select>
        <UpDown />
      </SelectBox>
      <FilterIcons>
        {filterArt.map(([name, art]) => (
          <IconButton key={name} aria-label={name}>
            <svg width="16" height="16" viewBox="0 0 16 16">{art}</svg>
          </IconButton>
        ))}
      </FilterIcons>
      <FilterToggle aria-label="打开筛选" />
    </LayerRowBar>
    <LayerRowBar $height={28}>
      <BlendSelect $width={110} $dim>
        <Select $pad={8} aria-label="混合模式">
          <option>正常</option>
        </Select>
        <UpDown />
      </BlendSelect>
      <FieldLabel $dim htmlFor="layer-opacity" $width={56}>不透明度:</FieldLabel>
      <Percent id="layer-opacity" dim />
    </LayerRowBar>
    <LayerRowBar $height={29}>
      <FieldLabel as="span" $dim $width={37}>锁定:</FieldLabel>
      <LockIcons>
        {lockArt.map(([name, art]) => (
          <IconButton key={name} aria-label={name}>
            <svg width="16" height="16" viewBox="0 0 16 16">{art}</svg>
          </IconButton>
        ))}
      </LockIcons>
      <FieldLabel $dim htmlFor="fill" $width={33}>填充:</FieldLabel>
      <Percent id="fill" dim />
    </LayerRowBar>
    <LayersBody>
      <PanelList>
        <LayerItem>
          <EyeButton aria-label="可见性">
            <svg width="14" height="10" viewBox="0 0 14 10">
              <path d="M1 5.500C3.500.5 10.500.5 13 5.500 10.500 9.500 3.500 9.500 1 5.500z" fill="none" stroke="#ccc" strokeWidth="1.200" />
              <circle cx="7" cy="5" r="2.800" fill="#ddd" />
              <circle cx="7" cy="5" r="1.300" fill="#333" />
            </svg>
          </EyeButton>
          <Thumb />
          <LayerName>背景</LayerName>
          <Padlock />
        </LayerItem>
      </PanelList>
      <PanelScroll />
    </LayersBody>
    <PanelFooter $gap={13} $right={28}>
      <FooterButton aria-label="链接图层">
        <svg width="15" height="10" viewBox="0 0 15 10" fill="none" stroke="#999" strokeWidth="1.800">
          <path d="M6.500 3V2h-3a3 3 0 0 0 0 6h3V7M8.500 3V2h3a3 3 0 0 1 0 6h-3V7M4 5h7" />
        </svg>
      </FooterButton>
      <FooterButton aria-label="图层样式">
        <svg width="17" height="14" viewBox="0 0 17 14">
          <text x="2" y="11" fontFamily="Liberation Serif, serif" fontStyle="italic" fontSize="14" fill="#999">fx</text>
          <path d="M13 11h3l-1.500 2z" fill="#333" />
        </svg>
      </FooterButton>
      <FooterButton aria-label="添加蒙版">
        <svg width="13" height="12" viewBox="0 0 13 12">
          <path d="M0 1h13v10H0z" fill="#dcdcdc" />
          <circle cx="6.500" cy="6" r="2.500" fill="#444" />
        </svg>
      </FooterButton>
      <FooterButton aria-label="调整图层">
        <svg width="16" height="13" viewBox="0 0 16 13">
          <circle cx="6" cy="6" r="4.800" fill="#444" stroke="#dcdcdc" strokeWidth="1.500" />
          <path d="M2.500 9.500 9.500 2.500A5 5 0 0 0 2.500 9.500z" fill="#dcdcdc" />
          <path d="M12.500 10.500H16L14.200 12.500z" fill="#ddd" />
        </svg>
      </FooterButton>
      <FooterButton aria-label="新建组">
        <svg width="12" height="11" viewBox="0 0 12 11">
          <path d="M0 1h5l1 1.500h6V11H0z" fill="#dcdcdc" />
        </svg>
      </FooterButton>
      <FooterButton aria-label="新建图层">
        <svg width="13" height="12" viewBox="0 0 13 12">
          <path d="M1 1h10v10H7V6H1z" fill="#dcdcdc" />
          <path d="M1.500 6.500h4V11" fill="none" stroke="#ccc" strokeWidth="1.500" />
        </svg>
      </FooterButton>
      <FooterButton aria-label="删除图层">
        <Trash color="#999" />
      </FooterButton>
    </PanelFooter>
  </>
);

export default function App() {
  return (
    <Page>
      <GlobalStyle />
      <MenuBar>
        <Logo>Ps</Logo>
        <MenuList>
          {menus.map((m) => (
            <MenuItem key={m}>{m}</MenuItem>
          ))}
        </MenuList>
        <WindowButtons>
          <WindowButton $width={28} aria-label="最小化">
            <svg width="12" height="16" viewBox="0 0 12 16">
              <path d="M1 12h10" stroke="#ececec" strokeWidth="3" />
            </svg>
          </WindowButton>
          <WindowButton $width={27} aria-label="还原">
            <svg width="12" height="16" viewBox="0 0 12 16" fill="none" stroke="#ececec" strokeWidth="2">
              <path d="M5 8V5h6v5H8M1 9h6v4H1z" />
            </svg>
          </WindowButton>
          <WindowButton $width={46} aria-label="关闭">
            <svg width="12" height="16" viewBox="0 0 12 16">
              <path d="M1.500 5 10 13M10 5 1.500 13" stroke="#ececec" strokeWidth="2.500" />
            </svg>
          </WindowButton>
        </WindowButtons>
      </MenuBar>
      <Options />
      <Workspace>
        <Tools />
        <Center>
          <DocumentTabs />
          <CanvasRow>
            <CanvasArea>
              <Artboard />
            </CanvasArea>
            <ScrollTrack />
          </CanvasRow>
          <StatusBar>
            <Zoom>100%</Zoom>
            <StatusInfo>
              <svg width="21" height="11" viewBox="0 0 21 11">
                <rect width="21" height="11" rx="2" fill="#858585" />
                <circle cx="6" cy="5.500" r="2.500" fill="none" stroke="#444" strokeWidth="2.500" strokeDasharray="1.500 .5" />
                <path d="M14 3h2l3 3v3M12.500 4v1l3 3h2" fill="none" stroke="#444" strokeWidth="1.500" />
              </svg>
              <StatusText>文档:452.2K/0 字节</StatusText>
              <svg width="6" height="10" viewBox="0 0 6 10" fill="#f4f4f4">
                <path d="M0 0l6 5-6 5z" />
              </svg>
            </StatusInfo>
          </StatusBar>
        </Center>
        <Dock>
          <DockHeader $end>
            <Chevrons />
          </DockHeader>
          <History />
          <DockGap />
          <Layers />
        </Dock>
      </Workspace>
      <Annotation width="310" height="380" viewBox="0 0 310 380">
        <path d="M17 61h225v114H17z" fill="none" stroke="#ee1c25" strokeWidth="2" />
        <path d="M157 193l15 8-2 4 133 170-1.500 1L165 207l-4 2z" fill="#ee1c25" />
      </Annotation>
      <Watermark width="260" height="124" viewBox="1040 580 260 124">
        <g fill="#cdcdcd">
          <text x="1047" y="657" fontFamily="Liberation Sans, sans-serif" fontWeight="700" fontSize="54">Bai</text>
          <ellipse cx="1141" cy="612" rx="9" ry="11" />
          <ellipse cx="1158.300" cy="595" rx="8.500" ry="12" />
          <ellipse cx="1179.700" cy="596" rx="9" ry="11.500" transform="rotate(10 1179.700 596)" />
          <ellipse cx="1193.300" cy="617.300" rx="9" ry="11" />
          <path d="M1167 614c8 0 11 8 16 13s14 11 14 19c0 9-7 13-14 13-6 0-10-1-16-1s-10 1-16 1c-7 0-14-4-14-13 0-8 9-14 14-19s8-13 16-13z" />
          <text x="1205" y="654" fontFamily="Noto Sans CJK SC, sans-serif" fontWeight="700" fontSize="41">经验</text>
        </g>
        <text x="1147" y="652" fontFamily="Roboto, sans-serif" fontWeight="700" fontSize="35" fill="#464646">du</text>
        <text x="1049" y="690" fontFamily="Noto Sans, sans-serif" fontWeight="500" fontSize="28" fill="#dcdcdc">jingyan.baidu.com</text>
      </Watermark>
    </Page>
  );
}
